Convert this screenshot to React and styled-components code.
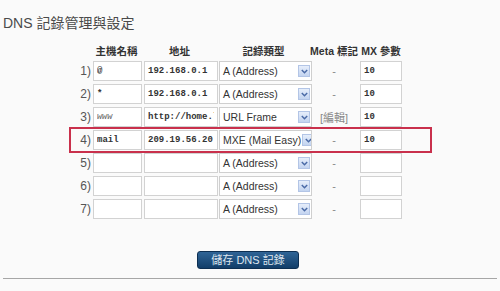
import React from "react";
import styled, { createGlobalStyle } from "styled-components";

const GlobalStyle = createGlobalStyle`
  html, body {
    margin: 0;
    padding: 0;
    background: #fafafa;
    font-family: "Liberation Sans", "Noto Sans CJK TC", sans-serif;
  }
`;

const Page = styled.div`
  width: 500px;
  height: 291px;
  overflow: hidden;
  background: #fafafa;
`;

const Title = styled.div`
  padding: 13px 0 0 3px;
  height: 20px;
  font-size: 14px;
  line-height: 20px;
  color: #4a4a4a;
`;

const Table = styled.div`
  margin: 10px 0 0 72px;
  width: 357px;
  display: flex;
  flex-direction: column;
  gap: 3px;
`;

const Row = styled.div`
  display: grid;
  grid-template-columns: 20px 49px 74px 93px 52px 42px;
  align-items: center;
  height: ${(p) => (p.$head ? "14px" : "20px")};
  margin-bottom: ${(p) => (p.$head ? "1px" : "0")};
  outline: ${(p) => (p.$mark ? "2px solid #c9304c" : "none")};
  outline-offset: 1px;
`;

const Head = styled.div`
  font-size: 10.5px;
  font-weight: bold;
  color: #333;
  text-align: center;
  white-space: nowrap;
  margin-left: ${(p) => p.$shift || 0}px;
`;

const Num = styled.div`
  font-size: 12px;
  color: #555;
  text-align: right;
  padding-right: 1px;
`;

const Field = styled.input`
  box-sizing: border-box;
  height: 20px;
  width: ${(p) => p.$w}px;
  margin-left: ${(p) => p.$ml || 0}px;
  border: 1px solid #d2d2d2;
  background: #fff;
  padding: 0 3px;
  font-family: "Liberation Mono", monospace;
  font-size: 9px;
  font-weight: bold;
  color: #333;
  outline: none;

  &.dim {
    font-weight: normal;
    font-size: 8.5px;
    font-style: italic;
    color: #666;
  }
`;

const Select = styled.div`
  box-sizing: border-box;
  height: 20px;
  width: 93px;
  margin-left: 4px;
  border: 1px solid #cfcfcf;
  background: #fff;
  display: flex;
  align-items: center;
  justify-content: space-between;
  padding: 0 1px 0 3px;
  font-size: 10.5px;
  color: #333;
  white-space: nowrap;
  overflow: hidden;
`;

const Arrow = styled.span`
  flex: none;
  width: 10px;
  height: 10px;
  margin-left: 1px;
  border: 1px solid #b3c5e6;
  background: linear-gradient(#e6eefb, #c3d4f0);
  display: flex;
  align-items: center;
  justify-content: center;
`;

const Meta = styled.div`
  font-size: 11px;
  color: #888;
  text-align: center;
`;

const Footer = styled.div`
  display: flex;
  justify-content: center;
  padding: 32px 4px 0 0;
`;

const SaveButton = styled.button`
  width: 102px;
  height: 18px;
  border: 1px solid #0d2f52;
  border-radius: 3px;
  background: linear-gradient(#2f6496, #123e69);
  color: #dfe6ef;
  font-family: "Liberation Sans", "Noto Sans CJK TC", sans-serif;
  font-size: 11px;
  line-height: 16px;
  padding: 0;
`;

const Rule = styled.div`
  margin: 9px 3px 0 3px;
  height: 1px;
  background: #a6a6a6;
`;

const records = [
  { host: "@", addr: "192.168.0.1", type: "A (Address)", meta: "-", mx: "10" },
  { host: "*", addr: "192.168.0.1", type: "A (Address)", meta: "-", mx: "10" },
  { host: "www", addr: "http://home.linux-stop.com", type: "URL Frame", meta: "[編輯]", mx: "10", dim: true },
  { host: "mail", addr: "209.19.56.20", type: "MXE (Mail Easy)", meta: "-", mx: "10", mark: true },
  { host: "", addr: "", type: "A (Address)", meta: "-", mx: "" },
  { host: "", addr: "", type: "A (Address)", meta: "-", mx: "" },
  { host: "", addr: "", type: "A (Address)", meta: "-", mx: "" },
];

function ArrowIcon() {
  return (
    <svg width="7" height="5" viewBox="0 0 7 5">
      <path d="M0.8 1 L3.5 3.7 L6.2 1" fill="none" stroke="#4a6aa6" strokeWidth="1.5" />
    </svg>
  );
}

export default function App() {
  return (
    <Page>
      <GlobalStyle />
      <Title>DNS 記錄管理與設定</Title>
      <Table>
        <Row $head>
          <div />
          <Head>主機名稱</Head>
          <Head $shift={3}>地址</Head>
          <Head $shift={4}>記錄類型</Head>
          <Head>Meta 標記</Head>
          <Head>MX 參數</Head>
        </Row>
        {records.map((r, i) => (
          <Row key={i} $mark={r.mark}>
            <Num>{i + 1})</Num>
            <Field $w={49} $ml={1} defaultValue={r.host} className={r.dim ? "dim" : ""} readOnly />
            <Field $w={74} $ml={3} defaultValue={r.addr} readOnly />
            <Select>
              <span>{r.type}</span>
              <Arrow>
                <ArrowIcon />
              </Arrow>
            </Select>
            <Meta>{r.meta}</Meta>
            <Field $w={42} defaultValue={r.mx} readOnly />
          </Row>
        ))}
      </Table>
      <Footer>
        <SaveButton>儲存 DNS 記錄</SaveButton>
      </Footer>
      <Rule />
    </Page>
  );
}
